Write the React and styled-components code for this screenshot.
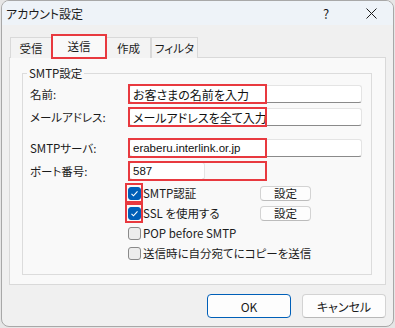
import React from 'react';
import styled, { createGlobalStyle } from 'styled-components';

const GlobalStyle = createGlobalStyle`
  html, body {
    margin: 0;
    padding: 0;
    background: #e6e6e6;
  }
  body {
    font-family: "Noto Sans CJK JP", "Noto Sans", sans-serif;
    font-size: 11.5px;
    color: #1b1b1b;
    font-feature-settings: "palt";
  }
`;

const Window = styled.div`
  box-sizing: border-box;
  width: 393px;
  height: 327px;
  margin-left: 1px;
  border: 1px solid #a8a8a8;
  border-radius: 8px;
  background: #f0f0f0;
  display: flex;
  flex-direction: column;
  overflow: hidden;
`;

const TitleBar = styled.div`
  height: 24px;
  display: flex;
  align-items: center;
  background: #eef3f8;
  padding-left: 4px;
`;

const Title = styled.div`
  flex: 1;
  font-size: 12px;
`;

const TitleButton = styled.div`
  width: ${p => p.w}px;
  height: 24px;
  display: flex;
  align-items: center;
  justify-content: center;
  font-size: 13px;
`;

const Body = styled.div`
  padding: 9px 7px 0;
  display: flex;
  flex-direction: column;
`;

const TabStrip = styled.div`
  display: flex;
  align-items: flex-end;
  height: 24px;
  margin-bottom: -1px;
  padding-left: 1px;
`;

const Tab = styled.div`
  position: relative;
  box-sizing: border-box;
  width: ${p => p.w}px;
  height: ${p => (p.active ? 24 : 21)}px;
  display: flex;
  align-items: center;
  justify-content: center;
  padding-bottom: ${p => (p.active ? 2 : 0)}px;
  border: 1px solid #d9d9d9;
  border-bottom: none;
  margin-left: ${p => (p.active ? -1 : 0)}px;
  margin-right: ${p => (p.active ? -1 : 0)}px;
  background: ${p => (p.active ? '#f9f9f9' : '#f3f3f3')};
  z-index: ${p => (p.active ? 1 : 0)};
  font-size: 11.5px;
`;

const Mark = styled.div`
  position: absolute;
  box-sizing: border-box;
  border: 2px solid #e8393f;
  pointer-events: none;
`;

const TabMark = styled(Mark)`
  left: -1px;
  top: -1px;
  right: -1px;
  bottom: -1px;
`;

const Panel = styled.div`
  box-sizing: border-box;
  height: 228px;
  border: 1px solid #d9d9d9;
  background: #f9f9f9;
  padding: 7px 13px 0 12px;
`;

const Group = styled.fieldset`
  margin: 0;
  padding: 4px 9px 13px 7px;
  border: 1px solid #dcdcdc;
  display: flex;
  flex-direction: column;
`;

const Legend = styled.legend`
  margin-left: -3px;
  padding: 0 2px;
  line-height: 16px;
  font-size: 11.5px;
`;

const FieldRow = styled.div`
  display: flex;
  align-items: center;
  height: 18px;
  margin-top: ${p => p.gap || 0}px;
`;

const Label = styled.div`
  width: 99px;
  flex: none;
`;

const Slot = styled.div`
  position: relative;
  flex: 1;
  height: 18px;
`;

const Field = styled.input`
  box-sizing: border-box;
  width: ${p => (p.w ? `${p.w}px` : '100%')};
  height: 18px;
  margin: 0;
  padding: 0 3px;
  border: 1px solid #e4e4e4;
  border-bottom-color: #8a8a8a;
  border-radius: 3px;
  background: #fff;
  font-family: ${p => (p.latin ? '"Liberation Sans", Arial, sans-serif' : 'inherit')};
  font-size: ${p => (p.latin ? 11.5 : 12)}px;
  font-feature-settings: "palt";
  color: #111;
  outline: none;
`;

const FieldMark = styled(Mark)`
  left: -1px;
  top: -1px;
  width: 139px;
  height: 20px;
`;

const CheckRow = styled.div`
  display: flex;
  align-items: center;
  height: 16px;
  margin-top: ${p => p.gap}px;
  padding-left: 98px;
`;

const BoxWrap = styled.div`
  position: relative;
  width: 13px;
  height: 13px;
  margin-right: 2px;
  flex: none;
`;

const Box = styled.div`
  box-sizing: border-box;
  width: 13px;
  height: 13px;
  border-radius: 3px;
  border: 1px solid ${p => (p.checked ? '#005fb8' : '#8a8a8a')};
  background: ${p => (p.checked ? '#005fb8' : '#ededed')};
  display: flex;
  align-items: center;
  justify-content: center;
`;

const BoxMark = styled(Mark)`
  left: -3px;
  top: -4px;
  width: 18px;
  height: 20px;
`;

const CheckLabel = styled.div`
  width: 117px;
  flex: none;
  white-space: nowrap;
`;

const SmallButton = styled.div`
  box-sizing: border-box;
  width: 51px;
  height: 15px;
  border: 1px solid #d3d3d3;
  border-bottom-color: #bcbcbc;
  border-radius: 4px;
  background: #fdfdfd;
  display: flex;
  align-items: center;
  justify-content: center;
  font-size: 11.5px;
`;

const ButtonRow = styled.div`
  display: flex;
  justify-content: flex-end;
  gap: 11px;
  margin-top: 9px;
`;

const DialogButton = styled.div`
  box-sizing: border-box;
  width: 84px;
  height: 24px;
  border: 1px solid ${p => (p.primary ? '#005fb8' : '#d3d3d3')};
  border-bottom-color: ${p => (p.primary ? '#005fb8' : '#b8b8b8')};
  border-radius: 4px;
  background: #fdfdfd;
  display: flex;
  align-items: center;
  justify-content: center;
  font-size: 12px;
`;

const Check = ({ checked, marked }) => (
  <BoxWrap>
    <Box checked={checked}>
      {checked && (
        <svg width="9" height="9" viewBox="0 0 9 9">
          <polyline points="1.5,4.8 3.5,6.8 7.5,2.3" fill="none" stroke="#fff" strokeWidth="1.1" />
        </svg>
      )}
    </Box>
    {marked && <BoxMark />}
  </BoxWrap>
);

const fields = [
  { label: '名前:', value: 'お客さまの名前を入力', gap: 0 },
  { label: 'メールアドレス:', value: 'メールアドレスを全て入力', gap: 5 },
  { label: 'SMTPサーバ:', value: 'eraberu.interlink.or.jp', gap: 13, latin: true },
  { label: 'ポート番号:', value: '587', gap: 5, w: 76, latin: true },
];

const checks = [
  { label: 'SMTP認証', checked: true, marked: true, button: true, gap: 5 },
  { label: 'SSL を使用する', checked: true, marked: true, button: true, gap: 4 },
  { label: 'POP before SMTP', gap: 4 },
  { label: '送信時に自分宛てにコピーを送信', gap: 4 },
];

const tabs = [
  { label: '受信', w: 42 },
  { label: '送信', w: 56, active: true },
  { label: '作成', w: 45 },
  { label: 'フィルタ', w: 47 },
];

export default function App() {
  return (
    <>
      <GlobalStyle />
      <Window>
        <TitleBar>
          <Title>アカウント設定</Title>
          <TitleButton w={46}>?</TitleButton>
          <TitleButton w={44}>
            <svg width="11" height="11" viewBox="0 0 11 11">
              <path d="M0.5 0.5 L10.5 10.5 M10.5 0.5 L0.5 10.5" stroke="#1b1b1b" strokeWidth="1" />
            </svg>
          </TitleButton>
        </TitleBar>
        <Body>
          <TabStrip>
            {tabs.map(t => (
              <Tab key={t.label} w={t.w} active={t.active}>
                {t.label}
                {t.active && <TabMark />}
              </Tab>
            ))}
          </TabStrip>
          <Panel>
            <Group>
              <Legend>SMTP設定</Legend>
              {fields.map(f => (
                <FieldRow key={f.label} gap={f.gap}>
                  <Label>{f.label}</Label>
                  <Slot>
                    <Field w={f.w} latin={f.latin} value={f.value} readOnly />
                    <FieldMark />
                  </Slot>
                </FieldRow>
              ))}
              {checks.map(c => (
                <CheckRow key={c.label} gap={c.gap}>
                  <Check checked={c.checked} marked={c.marked} />
                  <CheckLabel>{c.label}</CheckLabel>
                  {c.button && <SmallButton>設定</SmallButton>}
                </CheckRow>
              ))}
            </Group>
          </Panel>
          <ButtonRow>
            <DialogButton primary>OK</DialogButton>
            <DialogButton>キャンセル</DialogButton>
          </ButtonRow>
        </Body>
      </Window>
    </>
  );
}
